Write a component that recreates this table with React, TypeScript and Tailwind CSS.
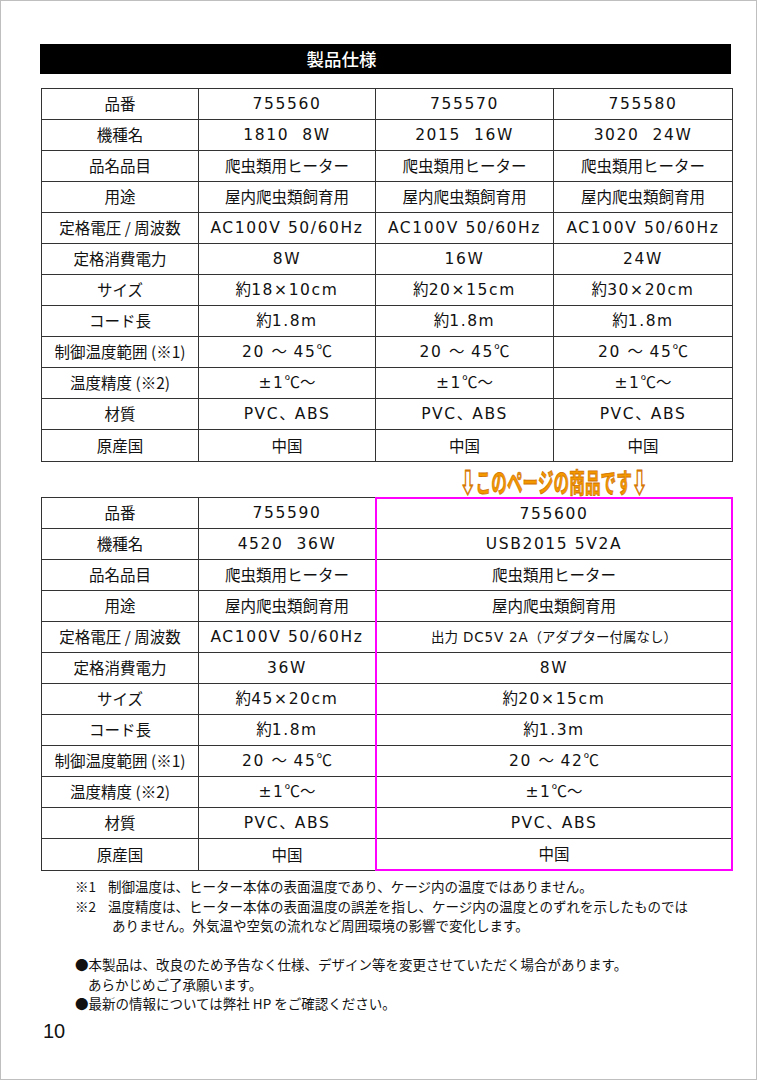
import React from "react";

const rows1: string[][] = [
  ["品番", "755560", "755570", "755580"],
  ["機種名", "1810  8W", "2015  16W", "3020  24W"],
  ["品名品目", "爬虫類用ヒーター", "爬虫類用ヒーター", "爬虫類用ヒーター"],
  ["用途", "屋内爬虫類飼育用", "屋内爬虫類飼育用", "屋内爬虫類飼育用"],
  ["定格電圧 / 周波数", "AC100V 50/60Hz", "AC100V 50/60Hz", "AC100V 50/60Hz"],
  ["定格消費電力", "8W", "16W", "24W"],
  ["サイズ", "約18×10cm", "約20×15cm", "約30×20cm"],
  ["コード長", "約1.8m", "約1.8m", "約1.8m"],
  ["制御温度範囲 (※1)", "20 ～ 45℃", "20 ～ 45℃", "20 ～ 45℃"],
  ["温度精度 (※2)", "±1℃～", "±1℃～", "±1℃～"],
  ["材質", "PVC、ABS", "PVC、ABS", "PVC、ABS"],
  ["原産国", "中国", "中国", "中国"],
];

const rows2: string[][] = [
  ["品番", "755590", "755600"],
  ["機種名", "4520  36W", "USB2015 5V2A"],
  ["品名品目", "爬虫類用ヒーター", "爬虫類用ヒーター"],
  ["用途", "屋内爬虫類飼育用", "屋内爬虫類飼育用"],
  ["定格電圧 / 周波数", "AC100V 50/60Hz", "出力 DC5V 2A（アダプター付属なし）"],
  ["定格消費電力", "36W", "8W"],
  ["サイズ", "約45×20cm", "約20×15cm"],
  ["コード長", "約1.8m", "約1.3m"],
  ["制御温度範囲 (※1)", "20 ～ 45℃", "20 ～ 42℃"],
  ["温度精度 (※2)", "±1℃～", "±1℃～"],
  ["材質", "PVC、ABS", "PVC、ABS"],
  ["原産国", "中国", "中国"],
];

function Mixed({ t, small }: { t: string; small?: boolean }) {
  const parts = t.split(/([\x20-\x7E×±]+)/);
  return (
    <span className={small ? "text-[13.5px]" : "text-[15.5px]"}>
      {parts.map((p, i) =>
        i % 2 === 1 ? (
          <span
            key={i}
            className={
              small
                ? "font-['DejaVu_Sans',sans-serif] text-[13.5px] tracking-[0.8px]"
                : "font-['DejaVu_Sans',sans-serif] text-[15.5px] tracking-[1.6px]"
            }
          >
            {p}
          </span>
        ) : (
          <span key={i}>{p}</span>
        )
      )}
    </span>
  );
}

function Label({ t }: { t: string }) {
  return <span className="text-[15.5px]">{t}</span>;
}

export default function App() {
  return (
    <div className="w-[757px] h-[1080px] border border-[#bfbfbf] bg-white text-[#111] font-['Noto_Sans_CJK_JP','Noto_Sans',sans-serif] overflow-hidden">
      <div className="pl-[39px] pt-[43px]">
        {/* title bar */}
        <div className="w-[691px] h-[30px] bg-black flex items-center justify-center pr-[88px]">
          <span className="text-white text-[17.5px] font-medium leading-none">製品仕様</span>
        </div>

        {/* table 1 */}
        <div className="ml-px mt-[14px] w-[692px] border border-[#333]">
          {rows1.map((r, ri) => (
            <div
              key={ri}
              className={`grid grid-cols-[157px_177px_178px_178px] h-[31px] ${
                ri < rows1.length - 1 ? "border-b border-[#333]" : ""
              }`}
            >
              {r.map((c, ci) => (
                <div
                  key={ci}
                  className={`flex items-center justify-center whitespace-pre leading-none ${
                    ci < 3 ? "border-r border-[#333]" : ""
                  }`}
                >
                  {ci === 0 ? <Label t={c} /> : <Mixed t={c} />}
                </div>
              ))}
            </div>
          ))}
        </div>

        {/* orange caption */}
        <div className="ml-px flex">
          <div className="w-[334px]" />
          <div className="w-[358px] h-[35px] flex items-center justify-center pt-[3px]">
            <span className="inline-block scale-x-[0.58] text-[27px] font-bold leading-none text-[#f39800] [-webkit-text-stroke:0.8px_#d07000] whitespace-nowrap">
              ⇩このページの商品です⇩
            </span>
          </div>
        </div>

        {/* table 2 */}
        <div className="ml-px flex">
          <div className="w-[334px] border-l border-t border-b border-[#333]">
            {rows2.map((r, ri) => (
              <div
                key={ri}
                className={`grid grid-cols-[157px_176px] h-[31px] ${
                  ri < rows2.length - 1 ? "border-b border-[#333]" : ""
                }`}
              >
                <div className="flex items-center justify-center border-r border-[#333] whitespace-pre leading-none">
                  <Label t={r[0]} />
                </div>
                <div className="flex items-center justify-center whitespace-pre leading-none">
                  <Mixed t={r[1]} />
                </div>
              </div>
            ))}
          </div>
          <div className="w-[358px] border-2 border-[#ff00ff]">
            {rows2.map((r, ri) => (
              <div
                key={ri}
                className={`flex items-center justify-center whitespace-pre leading-none ${
                  ri === 0 || ri === rows2.length - 1 ? "h-[30px]" : "h-[31px]"
                } ${ri < rows2.length - 1 ? "border-b border-[#333]" : ""}`}
              >
                <Mixed t={r[2]} small={ri === 4} />
              </div>
            ))}
          </div>
        </div>

        {/* notes */}
        <div className="mt-[6px] pl-[35px] text-[13.5px] leading-[19.5px]">
          <div className="flex">
            <span className="w-[33px]">※1</span>
            <span>制御温度は、ヒーター本体の表面温度であり、ケージ内の温度ではありません。</span>
          </div>
          <div className="flex">
            <span className="w-[33px]">※2</span>
            <span>温度精度は、ヒーター本体の表面温度の誤差を指し、ケージ内の温度とのずれを示したものでは</span>
          </div>
          <div className="pl-[37px]">ありません。外気温や空気の流れなど周囲環境の影響で変化します。</div>
          <div className="h-[19.5px]" />
          <div>●本製品は、改良のため予告なく仕様、デザイン等を変更させていただく場合があります。</div>
          <div className="pl-[13px]">あらかじめご了承願います。</div>
          <div>●最新の情報については弊社 HP をご確認ください。</div>
        </div>

        {/* page number */}
        <div className="mt-[5px] pl-[3px] text-[20px] leading-[24px] font-['Liberation_Sans',sans-serif]">10</div>
      </div>
    </div>
  );
}
